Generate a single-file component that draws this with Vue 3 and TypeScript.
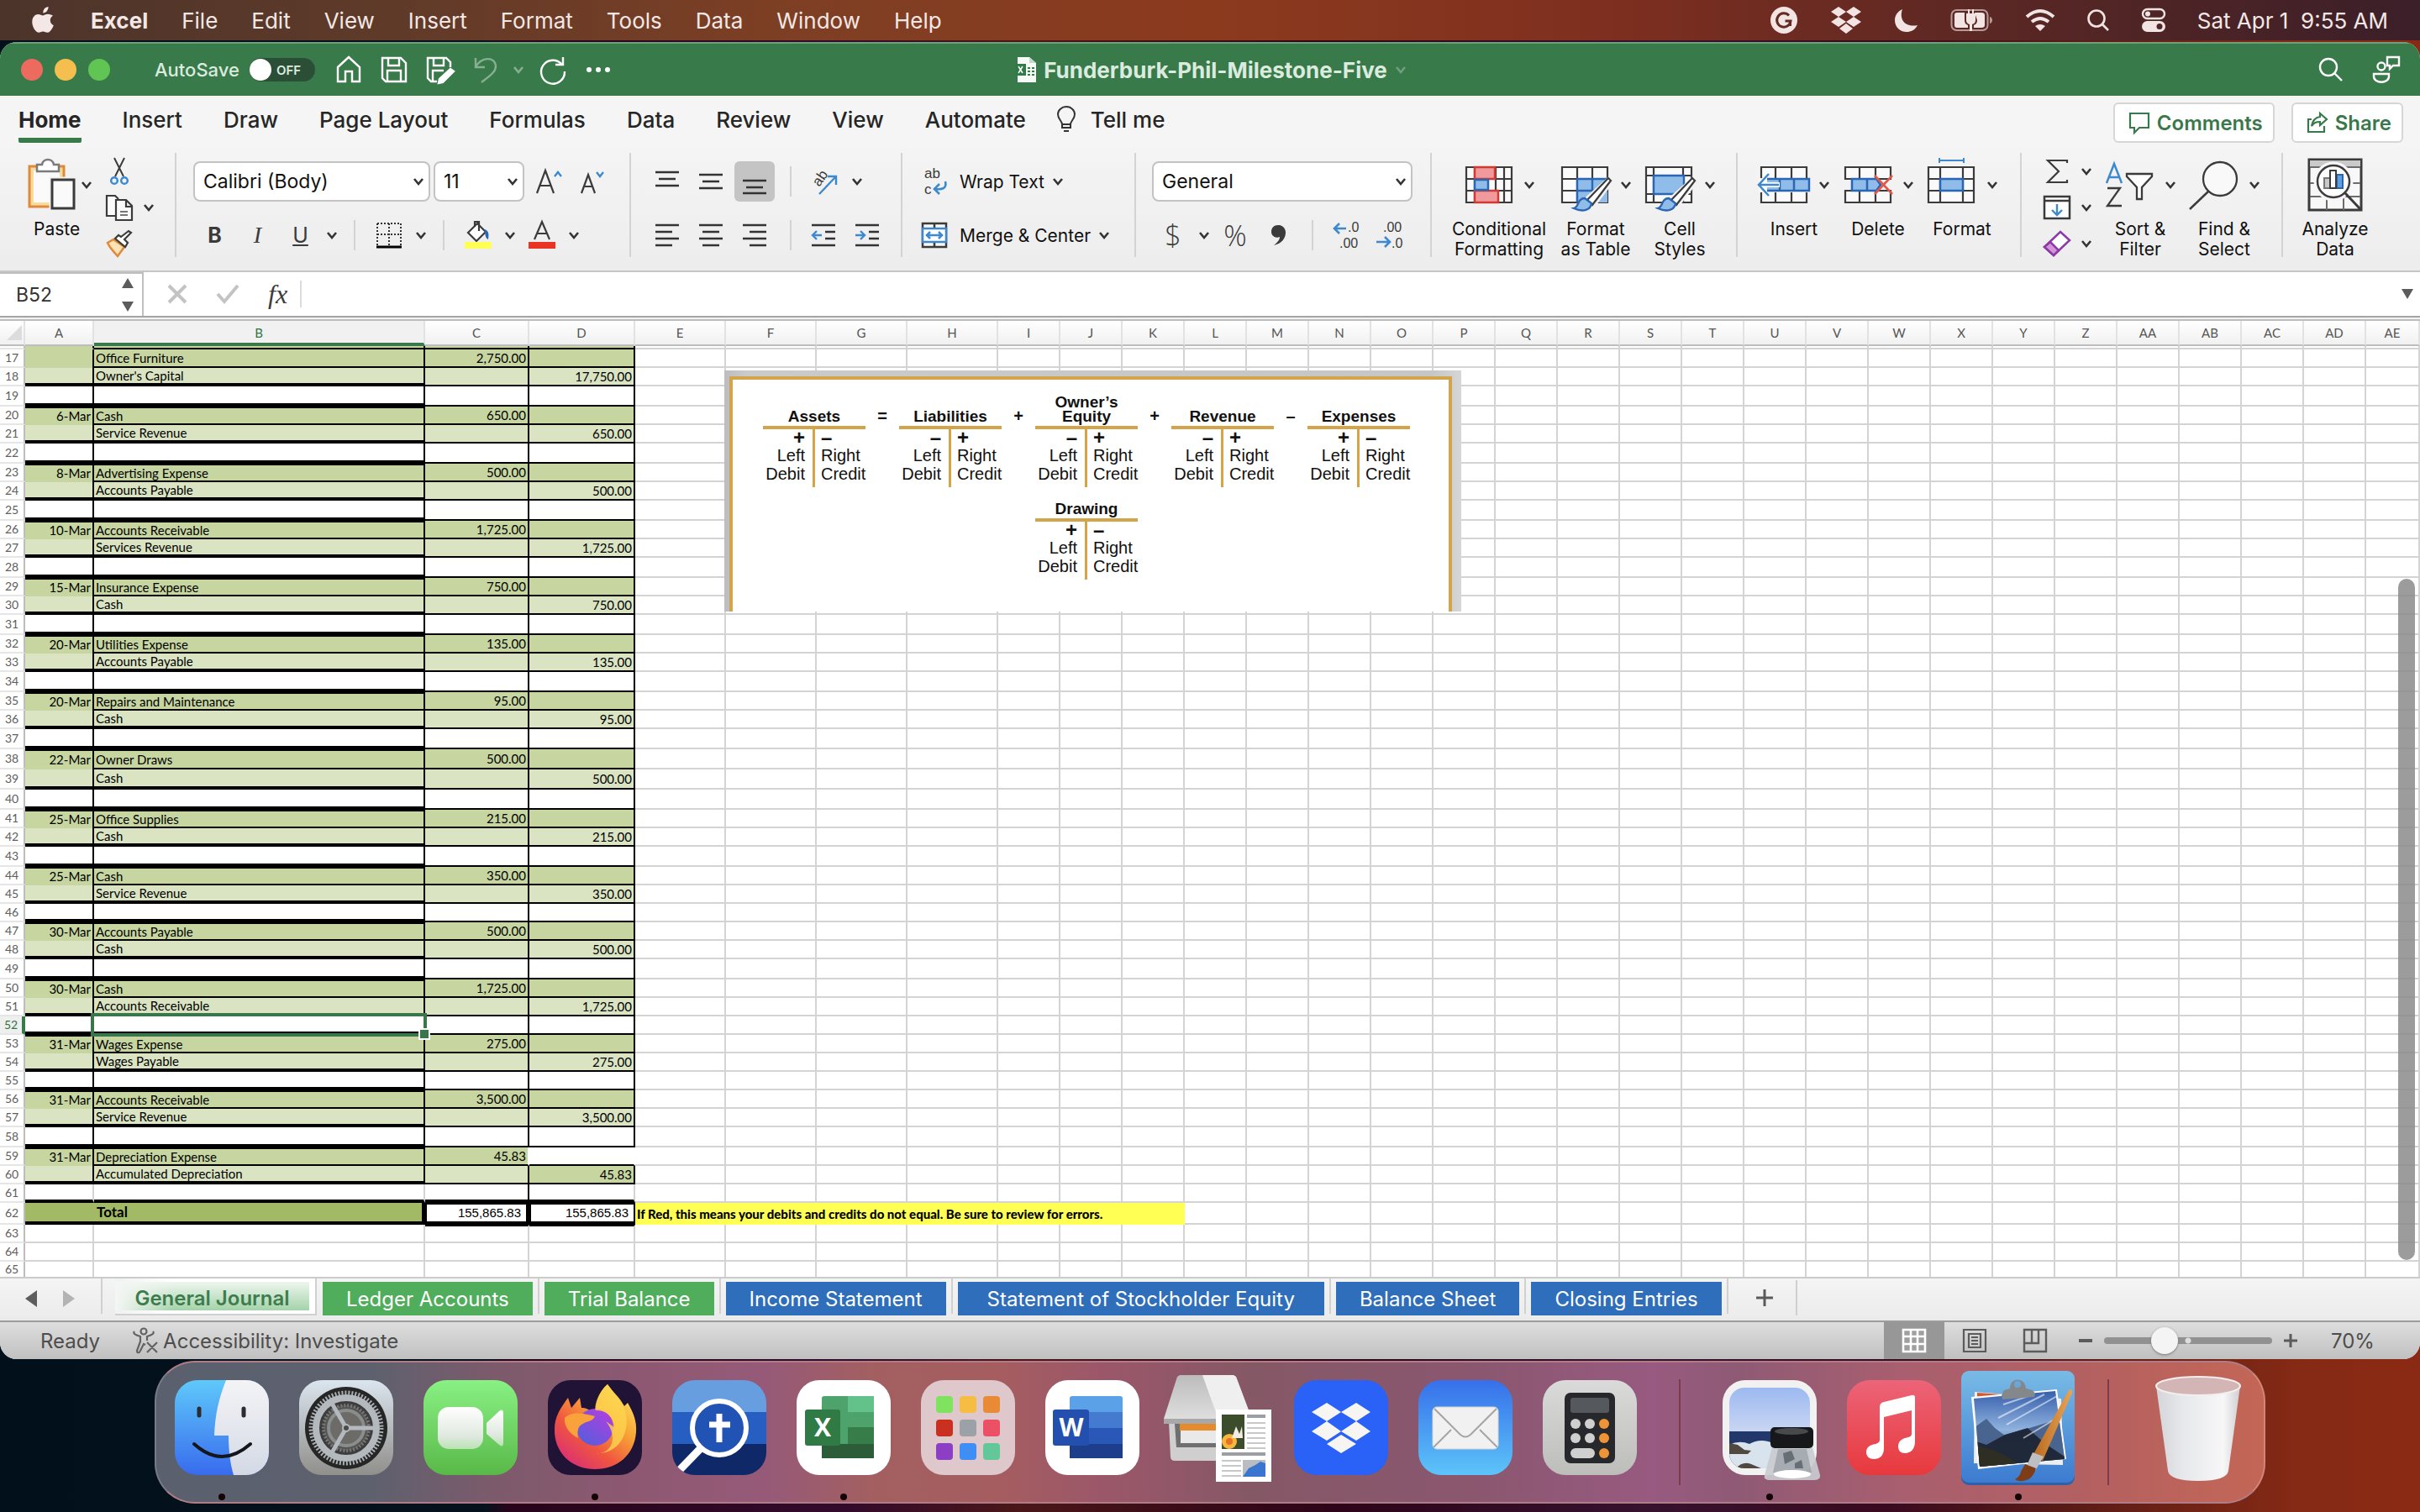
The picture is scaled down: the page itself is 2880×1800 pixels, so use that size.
<script setup lang="ts">
import { h, ref, type FunctionalComponent } from 'vue'

type RowKind = 'dark' | 'light' | 'gap' | 'plain'

interface JournalRow {
  n: number
  kind: RowKind
  height: number
  date?: string
  account?: string
  debit?: string
  credit?: string
}

const Caret: FunctionalComponent = () =>
  h('svg', { class: 'caret', viewBox: '0 0 16 16', 'aria-hidden': 'true' }, [
    h('path', { d: 'M3 5l5 6 5-6', fill: 'none', stroke: 'currentColor', 'stroke-width': '2.6' }),
  ])

const menus = ['File', 'Edit', 'View', 'Insert', 'Format', 'Tools', 'Data', 'Window', 'Help']
const ribbonTabs = ['Home', 'Insert', 'Draw', 'Page Layout', 'Formulas', 'Data', 'Review', 'View', 'Automate']

const restColumns = 'EFGHIJKLMNOPQRSTUVWXYZ'.split('').concat(['AA', 'AB', 'AC', 'AD', 'AE'])
const columns = ['A', 'B', 'C', 'D', ...restColumns]
const wideColumns = ['E', 'F', 'G', 'H']

const entries: [number, string, string, string, string][] = [
  [20, '6-Mar', 'Cash', 'Service Revenue', '650.00'],
  [23, '8-Mar', 'Advertising Expense', 'Accounts Payable', '500.00'],
  [26, '10-Mar', 'Accounts Receivable', 'Services Revenue', '1,725.00'],
  [29, '15-Mar', 'Insurance Expense', 'Cash', '750.00'],
  [32, '20-Mar', 'Utilities Expense', 'Accounts Payable', '135.00'],
  [35, '20-Mar', 'Repairs and Maintenance', 'Cash', '95.00'],
  [38, '22-Mar', 'Owner Draws', 'Cash', '500.00'],
  [41, '25-Mar', 'Office Supplies', 'Cash', '215.00'],
  [44, '25-Mar', 'Cash', 'Service Revenue', '350.00'],
  [47, '30-Mar', 'Accounts Payable', 'Cash', '500.00'],
  [50, '30-Mar', 'Cash', 'Accounts Receivable', '1,725.00'],
  [53, '31-Mar', 'Wages Expense', 'Wages Payable', '275.00'],
  [56, '31-Mar', 'Accounts Receivable', 'Service Revenue', '3,500.00'],
  [59, '31-Mar', 'Depreciation Expense', 'Accumulated Depreciation', '45.83'],
]

const shortGaps = [46, 52, 55]

const rows: JournalRow[] = [
  { n: 17, kind: 'dark', height: 22, account: 'Office Furniture', debit: '2,750.00' },
  { n: 18, kind: 'light', height: 22, account: "Owner's Capital", credit: '17,750.00' },
]
for (const [n, date, debitAccount, creditAccount, amount] of entries) {
  const tall = n === 38 ? 24 : 22
  rows.push({ n: n - 1, kind: 'gap', height: shortGaps.includes(n - 1) ? 22 : 24 })
  rows.push({ n, kind: 'dark', height: tall, date, account: debitAccount, debit: amount })
  rows.push({ n: n + 1, kind: 'light', height: tall, account: creditAccount, credit: amount })
}
rows.push({ n: 61, kind: 'plain', height: 22 })

const sheetTabs = [
  { name: 'Ledger Accounts', tone: 'green' },
  { name: 'Trial Balance', tone: 'green' },
  { name: 'Income Statement', tone: 'blue' },
  { name: 'Statement of Stockholder Equity', tone: 'blue long' },
  { name: 'Balance Sheet', tone: 'blue' },
  { name: 'Closing Entries', tone: 'blue' },
]

const accounts = [
  { title: ['Assets'], left: '+', right: '–', op: '=' },
  { title: ['Liabilities'], left: '–', right: '+', op: '+' },
  { title: ['Owner’s', 'Equity'], left: '–', right: '+', op: '+' },
  { title: ['Revenue'], left: '–', right: '+', op: '–' },
  { title: ['Expenses'], left: '+', right: '–', op: '' },
]

const launchpadTiles = [
  ['#7fe35f', '#f5bd42', '#e98a36'],
  ['#c9301f', '#9aa2a8', '#ec5064'],
  ['#8c3fc4', '#3f8df5', '#62c89a'],
]

const fontName = ref('Calibri (Body)')
const fontSize = ref('11')
const numberFormat = ref('General')
const cellName = ref('B52')
const formula = ref('')
const autoSave = ref(false)
const zoom = ref(70)
</script>

<template>
  <div class="desktop">
    <header class="menubar">
      <svg class="apple" viewBox="0 0 28 34" aria-hidden="true">
        <path d="M19.5 1c.2 2-.6 3.900-1.700 5.200-1.200 1.400-2.900 2.300-4.500 2.200-.2-1.900.7-3.900 1.700-5.100C16.200 1.900 18.100 1.100 19.500 1zM25 11.800c-2 1.200-3.200 3-3.200 5.400 0 2.800 1.600 4.900 4 5.800-.5 1.600-1.300 3.200-2.300 4.700-1.400 2-2.800 4-5 4s-2.800-1.300-5.300-1.300-3.300 1.300-5.300 1.300c-2.200 0-3.800-2.200-5.200-4.200C.9 24.700-.3 20.500.5 16.600c.7-3.800 3.400-6.700 7-6.700 2.300 0 4.200 1.500 5.600 1.500 1.400 0 3.600-1.700 6.200-1.600 2.200.1 4.300.9 5.700 2z" />
      </svg>
      <nav class="menus">
        <button class="menu app-name">Excel</button>
        <button v-for="m in menus" :key="m" class="menu">{{ m }}</button>
      </nav>
      <div class="extras">
        <svg width="34" height="34" viewBox="0 0 34 34"><circle cx="17" cy="17" r="16" /><path d="M23 11.500a8.200 8.200 0 1 0 2 6.500h-6.500M24.500 18v6" fill="none" stroke="#632a23" stroke-width="3" /></svg>
        <svg width="40" height="34" viewBox="0 0 40 34"><path d="M11 1l9 6-9 6-9-6zM29 1l9 6-9 6-9-6zM11 13l9 6-9 6-9-6zM29 13l9 6-9 6-9-6zM20 21l8 6-8 6-8-6z" /></svg>
        <svg width="30" height="30" viewBox="0 0 30 30"><path d="M10 2C6 13 12 24 28 21 25 27 20 29 15 29 7 29 1 23 1 15 1 9 5 4 10 2z" /></svg>
        <svg width="52" height="30" viewBox="0 0 52 30"><rect x="1.500" y="3" width="43" height="24" rx="6" fill="none" stroke="#b59a98" stroke-width="2" /><path d="M47 11c4 1 4 7 0 8z" fill="#b59a98" /><path d="M8 6h9v9c0 4 2 5 4 6v3H8q-3 0-3-3V9q0-3 3-3zM29 6h8q4 0 4 3v12q0 3-4 3h-9v-3c3-1 4-3 4-6z" /><path d="M19 7h2V2h2v5h3V2h2v5h2v8q0 4-4 5v8h-3v-8q-4-1-4-5z" /></svg>
        <svg width="36" height="28" viewBox="0 0 36 28"><path d="M2 10Q18-4 34 10M8 16q10-8 20 0" fill="none" stroke="#f1e4e2" stroke-width="4" /><path d="M12 21q6-4 12 0l-6 6z" /></svg>
        <svg width="28" height="28" viewBox="0 0 28 28"><g fill="none" stroke="#f1e4e2" stroke-width="2.600"><circle cx="12" cy="12" r="9.500" /><path d="M19 19l7 7" /></g></svg>
        <svg width="30" height="30" viewBox="0 0 30 30"><rect x="2" y="2" width="26" height="11" rx="5.500" fill="none" stroke="#f1e4e2" stroke-width="2.400" /><circle cx="8" cy="7.500" r="3" /><rect x="1" y="16" width="28" height="13" rx="6.500" /><circle cx="22" cy="22.500" r="3.500" fill="#4f2526" /></svg>
        <span class="clock">Sat Apr 1&nbsp; 9:55 AM</span>
      </div>
    </header>

    <main class="window">
      <section class="titlebar">
        <div class="title-left">
          <div class="lights">
            <button class="light red" aria-label="Close"></button>
            <button class="light amber" aria-label="Minimize"></button>
            <button class="light lime" aria-label="Zoom"></button>
          </div>
          <label class="autosave">AutoSave
            <span class="toggle"><input v-model="autoSave" type="checkbox" /><i></i><b>OFF</b></span>
          </label>
          <div class="quick">
            <button aria-label="Home"><svg width="32" height="32" viewBox="0 0 32 32"><path d="M3 13L16 1l13 12v17h-9V18h-8v12H3z" /></svg></button>
            <button aria-label="Save"><svg width="32" height="32" viewBox="0 0 32 32"><path d="M2 2h22l6 6v22H6l-4-4zM9 2v9h13V2M8 30V17h16v13" /></svg></button>
            <button aria-label="Save as"><svg width="34" height="32" viewBox="0 0 34 32"><path d="M13 30H6l-4-4V2h22l5 5v6M9 2v9h12V2M8 30V17h13" /><path d="M29 15l4 3-13 13-5 1 1-5z" fill="#fff" /></svg></button>
            <button class="dim" aria-label="Undo"><svg width="32" height="32" viewBox="0 0 32 32"><path d="M3 2v11h11M3 13C10 0 26 0 27 12c0 7-8 12-17 19" /></svg></button>
            <button class="dim small" aria-label="Undo list"><Caret /></button>
            <button aria-label="Redo"><svg width="34" height="34" viewBox="0 0 34 34"><path d="M29 2v9h-9M28 11A14 14 0 1 0 31 19" /></svg></button>
            <button aria-label="More"><svg width="30" height="8" viewBox="0 0 30 8"><g fill="#fff" stroke="none"><circle cx="4" cy="4" r="3" /><circle cx="15" cy="4" r="3" /><circle cx="26" cy="4" r="3" /></g></svg></button>
          </div>
        </div>
        <h1 class="doc-title">
          <svg width="26" height="30" viewBox="0 0 26 30"><path d="M3 0h14l8 7v23H3z" fill="#f6faf7" /><path d="M17 0v7h8z" fill="#c4d8c9" /><path d="M0 8h13v14H0z" fill="#2f7a46" /><path d="M4 11l5 8M9 11l-5 8" stroke="#fff" stroke-width="1.500" /><path d="M15 12h3v2h-3zM20 12h3v2h-3zM15 16h3v2h-3zM20 16h3v2h-3zM15 20h3v2h-3zM20 20h3v2h-3z" fill="#377b49" /></svg>
          <span>Funderburk-Phil-Milestone-Five</span>
          <Caret />
        </h1>
        <div class="title-right">
          <button aria-label="Search"><svg width="30" height="30" viewBox="0 0 30 30"><circle cx="13" cy="12" r="10" /><path d="M20 19l9 9" /></svg></button>
          <button aria-label="Presence"><svg width="36" height="34" viewBox="0 0 36 34"><circle cx="12" cy="13" r="4.500" /><path d="M3 22h18v3c0 9-18 9-18 0zM19 2h14v10h-7l-4 4v-4h-3z" /></svg></button>
        </div>
      </section>

      <section class="tabs">
        <nav class="tab-list">
          <button v-for="(t, i) in ribbonTabs" :key="t" :class="['tab', { active: i === 0 }]">{{ t }}</button>
          <button class="tab tell">
            <svg width="22" height="32" viewBox="0 0 22 32"><path d="M6 22c0-4-5-6-5-12a10 9 0 0 1 20 0c0 6-5 8-5 12v4H6zM6 22h10M8 30h6" fill="none" stroke="#333" stroke-width="2" /></svg>
            <span>Tell me</span>
          </button>
        </nav>
        <div class="tab-actions">
          <button class="pill"><svg width="26" height="26" viewBox="0 0 26 26"><path d="M2 2h22v17H13l-6 6v-6H2z" /></svg>Comments</button>
          <button class="pill"><svg width="26" height="26" viewBox="0 0 26 26"><path d="M6 9H2v15h19v-7M16 2l8 7-8 7v-4c-5 0-7 1-10 5 1-6 4-10 10-11z" /></svg>Share</button>
        </div>
      </section>

      <section class="ribbon">
        <div class="group clipboard">
          <div class="big">
            <button class="icon-row" aria-label="Paste">
              <svg width="64" height="64" viewBox="0 0 64 64"><path d="M6 10h41v48H6z" fill="#f8dc9b" stroke="#e1893b" stroke-width="3" /><path d="M11 15h31v38H11z" fill="#fafafa" /><path d="M15 8h6c1-8 13-8 14 0h6v8H15z" fill="#fff" stroke="#7b7b7b" stroke-width="2.500" /><path d="M33 26h26v34H33z" fill="#fff" stroke="#f1f1f1" stroke-width="7" /><path d="M33 26h26v34H33z" fill="#fafafa" stroke="#3b3b3b" stroke-width="3" /></svg>
              <Caret />
            </button>
            <span class="big-label">Paste</span>
          </div>
          <div class="stack">
            <button aria-label="Cut"><svg width="34" height="32" viewBox="0 0 34 32"><path d="M11 0l11 22M23 0L12 22" fill="none" stroke="#3b3b3b" stroke-width="2" /><g fill="none" stroke="#3c89d0" stroke-width="2.500"><circle cx="11" cy="27" r="3.800" /><circle cx="23" cy="27" r="3.800" /></g></svg></button>
            <button aria-label="Copy"><svg width="34" height="32" viewBox="0 0 34 32"><g fill="#fafafa" stroke="#3b3b3b" stroke-width="2.200"><path d="M12 26H2V2h10l4 4" /><path d="M13 7h12l7 7v17H13zM25 7v8h7" /></g><path d="M18 21h9M18 25h9" stroke="#777" stroke-width="2" /></svg><Caret /></button>
            <button aria-label="Format painter"><svg width="34" height="32" viewBox="0 0 34 32"><path d="M3 15l7-4 13 9-8 11C11 26 6 22 3 15z" fill="#fbe3b4" stroke="#e1893b" stroke-width="2.500" /><path d="M12 10l12 10 3-5-4-4 8-8-3-2-9 7-3-2z" fill="#fff" stroke="#3b3b3b" stroke-width="2.200" /></svg></button>
          </div>
        </div>

        <div class="group font">
          <div class="line">
            <label class="combo name"><select v-model="fontName" aria-label="Font"><option>Calibri (Body)</option></select><Caret /></label>
            <label class="combo size"><select v-model="fontSize" aria-label="Font size"><option>11</option></select><Caret /></label>
            <button class="tool grow" aria-label="Increase font size"><svg width="32" height="30" viewBox="0 0 32 30"><path d="M1 29L11 2l10 27M4 20h14" fill="none" stroke="#3b3b3b" stroke-width="2.200" /><path d="M22 9l4-5 4 5" fill="none" stroke="#3c89d0" stroke-width="2.400" /></svg></button>
            <button class="tool" aria-label="Decrease font size"><svg width="32" height="30" viewBox="0 0 32 30"><path d="M2 29L10 7l8 22M5 21h10" fill="none" stroke="#3b3b3b" stroke-width="2.200" /><path d="M20 4l4 5 4-5" fill="none" stroke="#3c89d0" stroke-width="2.400" /></svg></button>
          </div>
          <div class="line">
            <button class="tool glyph bold">B</button>
            <button class="tool glyph italic">I</button>
            <button class="tool glyph under">U</button>
            <button class="drop" aria-label="Underline style"><Caret /></button>
            <i class="rule"></i>
            <button class="tool" aria-label="Borders"><svg width="32" height="32" viewBox="0 0 32 32"><path d="M2 2h28v26M2 2v26M16 2v26M2 15h28" fill="none" stroke="#333" stroke-width="2" stroke-dasharray="2 2" /><path d="M1 30h30" stroke="#000" stroke-width="3" /></svg></button>
            <button class="drop" aria-label="Border list"><Caret /></button>
            <i class="rule"></i>
            <button class="tool" aria-label="Fill colour"><svg width="34" height="34" viewBox="0 0 34 34"><path d="M5 14L16 3l10 10-11 11zM13 7V1h5v11" fill="#fff" stroke="#3b3b3b" stroke-width="2.200" /><path d="M24 10c6 1 6 6 5 12-4-2-3-6-5-12z" fill="#2a66b4" /><path d="M1 25h32v8H1z" fill="#ffff54" /></svg></button>
            <button class="drop" aria-label="Fill list"><Caret /></button>
            <button class="tool" aria-label="Font colour"><svg width="34" height="34" viewBox="0 0 34 34"><path d="M8 22L17 1l9 21M11 15h12" fill="none" stroke="#3b3b3b" stroke-width="2.200" /><path d="M1 25h32v8H1z" fill="#eb3323" /></svg></button>
            <button class="drop" aria-label="Font colour list"><Caret /></button>
          </div>
        </div>

        <div class="group align">
          <div class="line">
            <button class="al" aria-label="Top align"><svg width="30" height="30" viewBox="0 0 30 30"><path d="M1 4h28M5 12h20M1 20h28" /></svg></button>
            <button class="al" aria-label="Middle align"><svg width="30" height="30" viewBox="0 0 30 30"><path d="M1 7h28M5 15h20M1 23h28" /></svg></button>
            <button class="al pressed" aria-label="Bottom align"><svg width="30" height="30" viewBox="0 0 30 30"><path d="M1 14h28M5 22h20M1 29h28" /></svg></button>
            <i class="rule"></i>
            <button class="al" aria-label="Orientation"><svg width="36" height="34" viewBox="0 0 36 34"><text x="0" y="0" transform="translate(13 24) rotate(-55)" class="ab">ab</text><path d="M13 32L32 12M23 11h10v10" class="blue" /></svg></button>
            <button class="drop" aria-label="Orientation list"><Caret /></button>
          </div>
          <div class="line">
            <button class="al" aria-label="Align left"><svg width="30" height="30" viewBox="0 0 30 30"><path d="M1 3h28M1 11h20M1 19h28M1 27h20" /></svg></button>
            <button class="al" aria-label="Center"><svg width="30" height="30" viewBox="0 0 30 30"><path d="M1 3h28M5 11h20M1 19h28M5 27h20" /></svg></button>
            <button class="al" aria-label="Align right"><svg width="30" height="30" viewBox="0 0 30 30"><path d="M1 3h28M9 11h20M1 19h28M9 27h20" /></svg></button>
            <i class="rule"></i>
            <button class="al" aria-label="Decrease indent"><svg width="30" height="30" viewBox="0 0 30 30"><path d="M1 3h28M17 11h12M17 19h12M1 27h28" /><path d="M13 15H2M7 10l-5 5 5 5" class="blue" /></svg></button>
            <button class="al" aria-label="Increase indent"><svg width="30" height="30" viewBox="0 0 30 30"><path d="M1 3h28M17 11h12M17 19h12M1 27h28" /><path d="M1 15h11M7 10l5 5-5 5" class="blue" /></svg></button>
          </div>
        </div>

        <div class="group wrap">
          <div class="line">
            <button class="wide"><svg width="32" height="38" viewBox="0 0 32 38"><text x="4" y="15" class="ab">ab</text><text x="4" y="34" class="ab">c</text><path d="M29 19c2 8-3 10-12 9M22 22l-6 6 6 6" fill="none" stroke="#3c89d0" stroke-width="2.600" /></svg><span>Wrap Text</span><Caret /></button>
          </div>
          <div class="line">
            <button class="wide"><svg width="32" height="32" viewBox="0 0 32 32"><path d="M2 2h28v28H2zM16 2v28" fill="#fafafa" stroke="#3b3b3b" stroke-width="2.500" /><path d="M2 8h28v16H2z" fill="#fff" stroke="#3c89d0" stroke-width="2.500" /><path d="M7 16h18M11 12l-4 4 4 4M21 12l4 4-4 4" fill="none" stroke="#3c89d0" stroke-width="2.500" /></svg><span>Merge &amp; Center</span><Caret /></button>
          </div>
        </div>

        <div class="group number">
          <div class="line">
            <label class="combo format"><select v-model="numberFormat" aria-label="Number format"><option>General</option></select><Caret /></label>
          </div>
          <div class="line">
            <button class="tool sign">$</button>
            <button class="drop" aria-label="Currency list"><Caret /></button>
            <button class="tool sign">%</button>
            <button class="tool" aria-label="Comma style"><svg width="20" height="28" viewBox="0 0 20 28"><path d="M10 2c6 0 9 4 9 9 0 7-5 13-14 15 5-4 7-7 7-10-5 2-10-1-10-6 0-5 3-8 8-8z" fill="#3b3b3b" /></svg></button>
            <i class="rule"></i>
            <button class="tool" aria-label="Increase decimal"><svg width="36" height="40" viewBox="0 0 36 40"><text x="19" y="16" class="dec">.0</text><text x="9" y="35" class="dec">.00</text><path d="M17 12H3M9 6l-6 6 6 6" fill="none" stroke="#3c89d0" stroke-width="2.600" /></svg></button>
            <button class="tool" aria-label="Decrease decimal"><svg width="36" height="40" viewBox="0 0 36 40"><text x="9" y="16" class="dec">.00</text><text x="19" y="35" class="dec">.0</text><path d="M1 28h15M11 22l6 6-6 6" fill="none" stroke="#3c89d0" stroke-width="2.600" /></svg></button>
          </div>
        </div>

        <div class="group styles">
          <div class="big cf">
            <button class="icon-row" aria-label="Conditional formatting"><svg width="64" height="64" viewBox="0 0 64 64"><path d="M5 11h54v42H5zM5 25h54M5 39h54M15 11v42M40 11v42M50 11v42" class="grid" /><path d="M15 11h24v14H15zM15 39h28v14H15z" fill="#f19a9e" stroke="#ce3b30" stroke-width="2.500" /><path d="M15 26h16v12H15z" fill="#8fbce8" stroke="#2a66b4" stroke-width="2.500" /></svg><Caret /></button>
            <span class="big-label">Conditional<br />Formatting</span>
          </div>
          <div class="big">
            <button class="icon-row" aria-label="Format as table"><svg width="64" height="64" viewBox="0 0 64 64"><path d="M4 11h54v42H4zM4 25h54M4 39h54M22 11v42M40 11v42" class="grid" /><path d="M22 25h36v28H22z" fill="#8fbce8" /><path d="M22 53V25h36M22 39h36M40 25v28" fill="none" stroke="#2a66b4" stroke-width="2.400" /><path d="M33 49L60 25l3 3-22 29z" fill="#fff" stroke="#f1f1f1" stroke-width="5" /><path d="M34 50L59 24l3 3-22 29z" fill="#fff" stroke="#3b3b3b" stroke-width="2.200" /><path d="M18 60c6-1 4-12 13-12l8 6c-1 8-10 11-21 6z" fill="#8fbce8" stroke="#2a66b4" stroke-width="2.300" /></svg><Caret /></button>
            <span class="big-label">Format<br />as Table</span>
          </div>
          <div class="big">
            <button class="icon-row" aria-label="Cell styles"><svg width="64" height="64" viewBox="0 0 64 64"><path d="M4 11h54v42H4zM4 21h54M4 43h54M13 11v42M48 11v42" class="grid" /><path d="M13 21h36v22H13z" fill="#8fbce8" stroke="#2a66b4" stroke-width="2.400" /><path d="M33 49L60 25l3 3-22 29z" fill="#fff" stroke="#f1f1f1" stroke-width="5" /><path d="M34 50L59 24l3 3-22 29z" fill="#fff" stroke="#3b3b3b" stroke-width="2.200" /><path d="M18 60c6-1 4-12 13-12l8 6c-1 8-10 11-21 6z" fill="#8fbce8" stroke="#2a66b4" stroke-width="2.300" /></svg><Caret /></button>
            <span class="big-label">Cell<br />Styles</span>
          </div>
        </div>

        <div class="group cells">
          <div class="big">
            <button class="icon-row" aria-label="Insert cells"><svg width="64" height="64" viewBox="0 0 64 64"><path d="M5 11h54v42H5zM22 11v42M41 11v42" class="grid" /><path d="M2 24h62v17H2z" fill="#f8f8f8" /><path d="M12 25h50v14H12M44 25v14M27 25v14" fill="#8fbce8" stroke="#2a66b4" stroke-width="2.500" /><path d="M5 29h22v6H5z" fill="#fff" /><path d="M26 32H2M14 19L2 32l12 13" fill="none" stroke="#3c89d0" stroke-width="2.500" /></svg><Caret /></button>
            <span class="big-label">Insert</span>
          </div>
          <div class="big">
            <button class="icon-row" aria-label="Delete cells"><svg width="64" height="64" viewBox="0 0 64 64"><path d="M5 11h54v14H5zM5 39h54v14H5zM22 11v14M41 11v14M22 39v14M41 39v14" class="grid" /><path d="M13 25h29l5 7-5 7H13z" fill="#8fbce8" stroke="#2a66b4" stroke-width="2.500" /><path d="M31 25v14" stroke="#2a66b4" stroke-width="2.500" /><path d="M40 21l21 22M61 21L40 43" stroke="#e25549" stroke-width="2.600" /></svg><Caret /></button>
            <span class="big-label">Delete</span>
          </div>
          <div class="big">
            <button class="icon-row" aria-label="Format cells"><svg width="64" height="64" viewBox="0 0 64 64"><path d="M4 11h54v42H4zM4 25h54M4 39h54M18 11v42M45 11v42" class="grid" /><path d="M18 25h27v14H18z" fill="#8fbce8" stroke="#2a66b4" stroke-width="2.500" /><path d="M17 3h29M17 0v6M46 0v6" stroke="#3c89d0" stroke-width="2" /></svg><Caret /></button>
            <span class="big-label">Format</span>
          </div>
        </div>

        <div class="group editing">
          <div class="stack">
            <button aria-label="AutoSum"><svg width="34" height="32" viewBox="0 0 34 32"><path d="M29 6V3H6l13 13L6 29h23v-3" fill="none" stroke="#3b3b3b" stroke-width="2.200" /></svg><Caret /></button>
            <button aria-label="Fill"><svg width="34" height="32" viewBox="0 0 34 32"><path d="M2 3h30v26H2zM2 8h30" fill="#fff" stroke="#3b3b3b" stroke-width="2.500" /><path d="M17 12v13M11 19l6 6 6-6" fill="none" stroke="#3c89d0" stroke-width="2.400" /></svg><Caret /></button>
            <button aria-label="Clear"><svg width="34" height="32" viewBox="0 0 34 32"><path d="M21 2l11 10-19 18L2 20z" fill="#fff" stroke="#8d3aa8" stroke-width="2.500" /><path d="M9 14L2 20l11 10 6-6z" fill="#d394d8" stroke="#8d3aa8" stroke-width="2.500" /></svg><Caret /></button>
          </div>
          <div class="big">
            <button class="icon-row" aria-label="Sort and filter"><svg width="64" height="64" viewBox="0 0 64 64"><path d="M4 30L13 7l9 23M7 23h12" fill="none" stroke="#3c89d0" stroke-width="2.500" /><path d="M5 36h15L5 57h17" fill="none" stroke="#3b3b3b" stroke-width="2.300" /><path d="M28 19h30v3L46 35v14h-6V35L28 22z" fill="#fff" stroke="#3b3b3b" stroke-width="2.300" /></svg><Caret /></button>
            <span class="big-label">Sort &amp;<br />Filter</span>
          </div>
          <div class="big">
            <button class="icon-row" aria-label="Find and select"><svg width="64" height="64" viewBox="0 0 64 64"><circle cx="39" cy="25" r="20" fill="#f9f9f9" stroke="#3b3b3b" stroke-width="2.300" /><path d="M25 40L3 61" stroke="#3b3b3b" stroke-width="2.500" /></svg><Caret /></button>
            <span class="big-label">Find &amp;<br />Select</span>
          </div>
        </div>

        <div class="group analyze">
          <div class="big">
            <button class="icon-row" aria-label="Analyze data"><svg width="66" height="64" viewBox="0 0 66 64"><path d="M2 2h62v60H2z" fill="#f8f8f8" stroke="#3b3b3b" stroke-width="3" /><path d="M3 3h60v7H3z" fill="#c9c9c9" /><path d="M3 11h60M3 30h60M3 46h60M23 46v16M43 46v16" stroke="#6c6c6c" stroke-width="2" /><circle cx="31" cy="28" r="20" fill="#fff" stroke="#f6f6f6" stroke-width="7" /><circle cx="31" cy="28" r="19" fill="#fff" stroke="#3b3b3b" stroke-width="2.500" /><path d="M20 24h7v12h-7z" fill="#c9c9c9" stroke="#777" stroke-width="2" /><path d="M35 20h7v16h-7z" fill="#5ea1e0" stroke="#2a66b4" stroke-width="2" /><path d="M27 15h7v21h-7z" fill="#fff" stroke="#3b3b3b" stroke-width="2" /><path d="M45 42l18 19" stroke="#3b3b3b" stroke-width="3" /></svg></button>
            <span class="big-label">Analyze<br />Data</span>
          </div>
        </div>
      </section>

      <section class="formula-bar">
        <div class="name-box">
          <input v-model="cellName" aria-label="Name box" />
          <svg width="16" height="42" viewBox="0 0 16 42"><path d="M1 13L8 1l7 12zM1 29l7 12 7-12z" fill="#5c5c5c" /></svg>
        </div>
        <div class="fx-tools">
          <button aria-label="Cancel"><svg width="24" height="24" viewBox="0 0 24 24"><path d="M2 2l20 20M22 2L2 22" stroke="#c3c3c3" stroke-width="4" /></svg></button>
          <button aria-label="Enter"><svg width="28" height="24" viewBox="0 0 28 24"><path d="M2 12l8 9L26 2" fill="none" stroke="#c3c3c3" stroke-width="4" /></svg></button>
          <button class="fx">fx</button>
        </div>
        <input v-model="formula" class="formula" aria-label="Formula" />
        <svg class="expand" width="16" height="12" viewBox="0 0 16 12"><path d="M1 0h14L8 12z" fill="#5c5c5c" /></svg>
      </section>

      <section class="sheet">
        <table>
          <colgroup>
            <col class="c-num" /><col class="c-a" /><col class="c-b" /><col class="c-c" /><col class="c-d" />
            <col v-for="c in restColumns" :key="c" :class="wideColumns.includes(c) ? 'c-wide' : c === 'AE' ? '' : 'c-std'" />
          </colgroup>
          <thead>
            <tr>
              <th class="corner"><svg width="18" height="18" viewBox="0 0 18 18"><path d="M18 0v18H0z" fill="#dcdcdc" /></svg></th>
              <th v-for="c in columns" :key="c" :class="{ current: c === 'B' }">{{ c }}</th>
            </tr>
          </thead>
          <tbody>
            <tr class="sliver">
              <th></th><td class="a dark"></td><td class="b dark"></td><td class="n dark"></td><td class="n dark"></td>
              <td v-for="c in restColumns" :key="c"></td>
            </tr>
            <tr v-for="r in rows" :key="r.n" :class="['row', 'h' + r.height, 'r-' + r.kind, 'row-' + r.n]">
              <th :class="{ current: r.n === 52 }">{{ r.n }}</th>
              <td class="a">{{ r.date }}</td>
              <td class="b">{{ r.account }}<span v-if="r.n === 52" class="cursor"><i></i></span></td>
              <td class="n c">{{ r.debit }}</td>
              <td class="n d">{{ r.credit }}</td>
              <td v-for="c in restColumns" :key="c"></td>
            </tr>
            <tr class="total">
              <th>62</th>
              <td class="ta"></td><td class="tb">Total</td><td class="tc">155,865.83</td><td class="td">155,865.83</td>
              <td class="warn" colspan="7">If Red, this means your debits and credits do not equal. Be sure to review for errors.</td>
              <td v-for="c in restColumns.slice(7)" :key="c"></td>
            </tr>
            <tr v-for="n in [63, 64, 65]" :key="n" :class="['row', n === 65 ? 'h18' : 'h22', 'row-' + n]">
              <th>{{ n }}</th>
              <td></td><td></td><td class="c"></td><td class="d"></td>
              <td v-for="c in restColumns" :key="c"></td>
            </tr>
          </tbody>
        </table>

        <figure class="chart">
          <div class="chart-card">
            <div class="equation">
              <template v-for="a in accounts" :key="a.title[0]">
                <div class="account">
                  <div class="heading"><span v-for="t in a.title" :key="t">{{ t }}</span></div>
                  <div class="tee">
                    <div class="side debit"><b>{{ a.left }}</b><span>Left</span><span>Debit</span></div>
                    <div class="side"><b>{{ a.right }}</b><span>Right</span><span>Credit</span></div>
                  </div>
                </div>
                <b v-if="a.op" class="op">{{ a.op }}</b>
              </template>
            </div>
            <div class="account drawing">
              <div class="heading single"><span>Drawing</span></div>
              <div class="tee">
                <div class="side debit"><b>+</b><span>Left</span><span>Debit</span></div>
                <div class="side"><b>–</b><span>Right</span><span>Credit</span></div>
              </div>
            </div>
          </div>
        </figure>
        <div class="scroll-thumb"></div>
      </section>

      <section class="sheet-tabs">
        <div class="arrows">
          <button aria-label="Previous sheet"><svg width="14" height="20" viewBox="0 0 14 20"><path d="M14 0v20L0 10z" fill="#5d5d5d" /></svg></button>
          <button aria-label="Next sheet"><svg width="14" height="20" viewBox="0 0 14 20"><path d="M0 0v20l14-10z" fill="#b3b3b3" /></svg></button>
        </div>
        <button class="sheet-tab current"><span>General Journal</span></button>
        <template v-for="(t, i) in sheetTabs" :key="t.name">
          <i v-if="i > 0" class="divider"></i>
          <button :class="['sheet-tab', t.tone]">{{ t.name }}</button>
        </template>
        <i class="divider"></i>
        <button class="add" aria-label="Add sheet"><svg width="20" height="20" viewBox="0 0 20 20"><path d="M10 0v20M0 10h20" stroke="#5a5a5a" stroke-width="3" /></svg></button>
      </section>

      <footer class="status">
        <span class="ready">Ready</span>
        <button class="access">
          <svg width="32" height="32" viewBox="0 0 32 32"><g fill="none" stroke="#636363" stroke-width="2.200"><circle cx="14" cy="5" r="3.500" /><path d="M3 5c-2 2 0 4 7 6v6L6 28c0 3 3 3 4 0l4-8 2 1M25 5c2 2 0 4-7 6v5M18 18l12 12M30 18L18 30" /></g></svg>
          <span>Accessibility: Investigate</span>
        </button>
        <div class="views">
          <button class="view on" aria-label="Normal"><svg width="28" height="28" viewBox="0 0 28 28"><path d="M1 1h26v26H1zM1 9h26M1 18h26M10 1v26M18 1v26" fill="#9f9f9f" stroke="#fff" stroke-width="2.600" /></svg></button>
          <button class="view" aria-label="Page layout"><svg width="28" height="28" viewBox="0 0 28 28"><path d="M1 1h26v26H1zM7 6h14v16H7zM10 10h8M10 14h8M10 18h8" fill="none" stroke="#5c5c5c" stroke-width="2.200" /></svg></button>
          <button class="view" aria-label="Page break"><svg width="28" height="28" viewBox="0 0 28 28"><path d="M1 1h26v26H1zM1 17h17V1M10 1v16" fill="none" stroke="#5c5c5c" stroke-width="2.400" /></svg></button>
        </div>
        <div class="zoom">
          <button aria-label="Zoom out"><svg width="16" height="16" viewBox="0 0 16 16"><path d="M0 8h16" stroke="#5c5c5c" stroke-width="4" /></svg></button>
          <input v-model="zoom" type="range" min="10" max="190" aria-label="Zoom" />
          <button aria-label="Zoom in"><svg width="16" height="16" viewBox="0 0 16 16"><path d="M0 8h16M8 0v16" stroke="#5c5c5c" stroke-width="3" /></svg></button>
        </div>
        <span class="percent">70%</span>
      </footer>
    </main>

    <nav class="dock">
      <svg width="0" height="0" class="defs" aria-hidden="true">
        <defs>
          <linearGradient id="gFinder" x2="0" y2="1"><stop stop-color="#5fc9fa" /><stop offset="1" stop-color="#386bee" /></linearGradient>
          <linearGradient id="gFace" x2="0" y2="1"><stop stop-color="#f4f4f6" /><stop offset="1" stop-color="#d3d9e5" /></linearGradient>
          <linearGradient id="gSet" x2="0" y2="1"><stop stop-color="#dbe5ee" /><stop offset="1" stop-color="#908f8b" /></linearGradient>
          <linearGradient id="gGreen" x2="0" y2="1"><stop stop-color="#88f183" /><stop offset="1" stop-color="#59b948" /></linearGradient>
          <linearGradient id="gCam" x2="0" y2="1"><stop stop-color="#fff" /><stop offset=".7" stop-color="#dfe8df" /><stop offset="1" stop-color="#b9e3b2" /></linearGradient>
          <linearGradient id="gFox" x1="1" x2=".2" y2="1"><stop stop-color="#fff36b" /><stop offset=".4" stop-color="#f8a636" /><stop offset=".7" stop-color="#f0563f" /><stop offset="1" stop-color="#d92d77" /></linearGradient>
          <linearGradient id="gGlobe" x1=".8" x2="0" y2="1"><stop stop-color="#b13ee0" /><stop offset="1" stop-color="#4a62dc" /></linearGradient>
          <linearGradient id="gMail" x2="0" y2="1"><stop stop-color="#3670ea" /><stop offset="1" stop-color="#5dc4f9" /></linearGradient>
          <linearGradient id="gGrey" x2="0" y2="1"><stop stop-color="#dadada" /><stop offset="1" stop-color="#bdbdba" /></linearGradient>
          <linearGradient id="gLid" x2="0" y2="1"><stop stop-color="#bcbcbc" /><stop offset="1" stop-color="#e2e2e2" /></linearGradient>
          <linearGradient id="gMusic" x2="0" y2="1"><stop stop-color="#ec6478" /><stop offset="1" stop-color="#e7393d" /></linearGradient>
          <linearGradient id="gPaint" x2="0" y2="1"><stop stop-color="#78bbe6" /><stop offset="1" stop-color="#3c7bd0" /></linearGradient>
          <linearGradient id="gSky" x2="0" y2="1"><stop stop-color="#9cb9f0" /><stop offset="1" stop-color="#c9d6f3" /></linearGradient>
          <linearGradient id="gNight" x2="0" y2="1"><stop stop-color="#3059a8" /><stop offset=".5" stop-color="#8fb2de" /><stop offset="1" stop-color="#40546f" /></linearGradient>
          <linearGradient id="gBin" y2="0"><stop stop-color="#d5d5d9" /><stop offset=".3" stop-color="#e6e7ea" /><stop offset=".8" stop-color="#f7f7f8" /><stop offset="1" stop-color="#cfcfd2" /></linearGradient>
          <linearGradient id="gWood" y2="0"><stop stop-color="#b8691f" /><stop offset="1" stop-color="#e9a455" /></linearGradient>
          <clipPath id="tile"><rect x="18" y="21" width="112" height="113" rx="27" /></clipPath>
          <clipPath id="shot"><rect x="26" y="30" width="96" height="96" rx="18" /></clipPath>
          <clipPath id="photo"><path d="M21 43l97-9 11 81-101 9z" /></clipPath>
        </defs>
      </svg>

      <button class="slot running" aria-label="Finder"><svg viewBox="0 0 148 156"><g clip-path="url(#tile)"><path d="M18 21h112v113H18z" fill="url(#gFinder)" /><path d="M79 21C70 44 66 62 65 87h17c0 18 2 34 6 47h46V21z" fill="url(#gFace)" /></g><path d="M47 55v8M100 55v8" stroke="#2c2c30" stroke-width="5" stroke-linecap="round" /><path d="M41 97q33 30 67 0" fill="none" stroke="#15161c" stroke-width="4" stroke-linecap="round" /></svg></button>
      <button class="slot" aria-label="System Settings"><svg viewBox="0 0 148 156"><rect x="18" y="21" width="112" height="113" rx="27" fill="url(#gSet)" /><circle cx="74" cy="78" r="49" fill="#252625" /><circle cx="74" cy="78" r="42" fill="none" stroke="#a8adb1" stroke-width="5" stroke-dasharray="2 2" /><circle cx="74" cy="78" r="36" fill="#3c3d3c" stroke="#b4b9bd" stroke-width="8" /><circle cx="74" cy="78" r="27" fill="#555552" stroke="#777" stroke-width="4" stroke-dasharray="2 2" /><circle cx="74" cy="78" r="21" fill="#6c6b67" stroke="#8a8d8e" stroke-width="4" /><path d="M74 78h36M74 78L56 47M74 78l-18 31" stroke="#b4b9bd" stroke-width="5" /><circle cx="74" cy="78" r="4" fill="#4c4c4c" stroke="#b4b9bd" stroke-width="2" /></svg></button>
      <button class="slot" aria-label="FaceTime"><svg viewBox="0 0 148 156"><rect x="18" y="21" width="112" height="113" rx="27" fill="url(#gGreen)" /><rect x="35" y="53" width="54" height="50" rx="13" fill="url(#gCam)" /><path d="M93 72l15-14q5-4 5 3v34q0 7-5 3L93 85z" fill="url(#gCam)" /></svg></button>
      <button class="slot running" aria-label="Firefox"><svg viewBox="0 0 148 156"><rect x="18" y="21" width="112" height="113" rx="27" fill="#201336" /><path d="M89 26c8 11 14 15 20 26l4-4c7 12 11 22 10 35-2 27-22 44-49 44-29 0-49-21-48-48 0-14 7-25 16-37l4 12 10-12 2 12c6-1 16 6 16 10 0-12 4-30 15-38z" fill="url(#gFox)" /><circle cx="74" cy="77" r="22" fill="url(#gGlobe)" /><path d="M38 66c8-9 25-5 36-2-3 7-9 5-16 10-5 3-5 10-4 16-10-5-17-14-16-24z" fill="#f9a23b" /><path d="M89 26c-12 11-16 26-14 31 14 0 21 8 22 20l-10-7c16 20 6 40-12 38 30 2 44-30 33-56L89 26z" fill="#fcd44f" opacity=".8" /></svg></button>
      <button class="slot" aria-label="Bible study"><svg viewBox="0 0 148 156"><g clip-path="url(#tile)"><path d="M18 21h112v38H18z" fill="#679ee0" /><path d="M18 59h112v38H18z" fill="#265fc1" /><path d="M18 97h112v38H18z" fill="#0f2868" /><path d="M51 103L23 132" stroke="#fff" stroke-width="9" /></g><circle cx="74" cy="78" r="32" fill="#2053b4" stroke="#fff" stroke-width="6" /><path d="M74 61v34M62 74h25" stroke="#fff" stroke-width="7" /></svg></button>
      <button class="slot running" aria-label="Excel"><svg viewBox="0 0 148 156"><rect x="18" y="21" width="112" height="113" rx="27" fill="#fff" /><rect x="48" y="40" width="62" height="74" rx="3" fill="#4ea36c" /><path d="M79 40h31v19H79z" fill="#63c28a" /><path d="M79 77h31v20H79z" fill="#377d49" /><path d="M48 97h62v17H48z" fill="#2c5c38" /><rect x="28" y="56" width="42" height="43" rx="3" fill="#2f7a45" /><text x="49" y="88" class="letter">X</text></svg></button>
      <button class="slot" aria-label="Launchpad"><svg viewBox="0 0 148 156"><rect x="18" y="21" width="112" height="113" rx="27" fill="#e2cfd1" opacity=".94" /><template v-for="(line, y) in launchpadTiles" :key="y"><rect v-for="(fill, x) in line" :key="fill" :x="36 + x * 28" :y="40 + y * 28" width="20" height="20" rx="4" :fill="fill" /></template></svg></button>
      <button class="slot" aria-label="Word"><svg viewBox="0 0 148 156"><rect x="18" y="21" width="112" height="113" rx="27" fill="#fff" /><rect x="47" y="40" width="63" height="74" rx="3" fill="#5ba1e8" /><path d="M47 59h63v19H47z" fill="#447bd0" /><path d="M47 78h63v19H47z" fill="#2a58b8" /><path d="M47 97h63v17H47z" fill="#1d3f8b" /><rect x="27" y="56" width="43" height="43" rx="3" fill="#2350ae" /><text x="49" y="88" class="letter">W</text></svg></button>
      <button class="slot" aria-label="Image capture"><svg viewBox="0 0 148 156"><path d="M17 70h100v42q0 5-5 5H24q-5 0-5-5z" fill="#cfcfcf" /><path d="M24 73h70v28H26z" fill="#6f6f6f" /><path d="M30 73h60v8H30z" fill="#e58b2c" /><path d="M31 81h60v15H31z" fill="#e9e9e9" /><path d="M30 15h64l3 2 18 48v8H11v-6L27 17z" fill="url(#gLid)" /><path d="M57 15h37l3 2 18 48H75z" fill="#efefef" /><path d="M11 67h104v6H11z" fill="#a8a8a8" /><path d="M73 56h66v86H73z" fill="#fff" /><path d="M80 62h27v41H80z" fill="#3c4d2c" /><circle cx="89" cy="94" r="9" fill="#f6b73c" /><circle cx="89" cy="94" r="4" fill="#e96f2b" /><path d="M97 76l4 9 3-9 1 14H92z" fill="#f2ece4" /><path d="M110 64h22M80 109h52" stroke="#9b9fa4" stroke-width="4" /><path d="M110 72h22M110 78h22M110 84h22M110 90h22M110 96h22M110 102h22M80 117h23M80 123h23M80 129h23M80 135h23" stroke="#c8c8c8" stroke-width="2" /><path d="M105 116h27v20h-27z" fill="#b9bcc0" /><path d="M105 136l7-10 8-4 6-4 6 2v16z" fill="#3a76cf" /></svg></button>
      <button class="slot" aria-label="Dropbox"><svg viewBox="0 0 148 156"><rect x="18" y="21" width="112" height="113" rx="27" fill="#2a61f6" /><path d="M57 48l17 11-17 11-18-11zM92 48l17 11-17 11-18-11zM57 70l17 12-17 11-18-11zM92 70l17 12-17 11-18-11zM74 86l18 11-18 11-17-11z" fill="#f7f5f2" /></svg></button>
      <button class="slot" aria-label="Mail"><svg viewBox="0 0 148 156"><rect x="18" y="21" width="112" height="113" rx="27" fill="url(#gMail)" /><rect x="35" y="53" width="78" height="50" rx="5" fill="#f1f1f1" stroke="#d5d5d5" /><path d="M36 101l21-21M112 101L91 80M37 55l31 31q6 5 12 0l31-31" fill="none" stroke="#a5a5a5" stroke-width="2" /></svg></button>
      <button class="slot" aria-label="Calculator"><svg viewBox="0 0 148 156"><rect x="18" y="21" width="112" height="113" rx="27" fill="url(#gGrey)" /><rect x="44" y="36" width="60" height="84" rx="7" fill="#26282b" /><rect x="51" y="42" width="46" height="18" rx="3" fill="#55585c" /><g fill="#cfcfcf"><circle cx="57" cy="73" r="6" /><circle cx="74" cy="73" r="6" /><circle cx="57" cy="90" r="6" /><circle cx="74" cy="90" r="6" /><rect x="51" y="102" width="29" height="12" rx="6" /></g><g fill="#ef9436"><circle cx="91" cy="73" r="6" /><circle cx="91" cy="90" r="6" /><circle cx="91" cy="108" r="6" /></g></svg></button>
      <i class="dock-rule"></i>
      <button class="slot running" aria-label="Preview"><svg viewBox="0 0 148 156"><rect x="18" y="21" width="112" height="113" rx="27" fill="#f2f1f2" /><g clip-path="url(#shot)"><path d="M26 30h96v52H26z" fill="url(#gSky)" /><path d="M26 82h96v44H26z" fill="#22376a" /><path d="M26 98q12-6 24-1 14-8 30 0l42-4v34H26z" fill="#d8e3ee" /><path d="M26 96l10 2 8 6 8 1-4 4H26zM34 126q8-9 18-5l12 5z" fill="#51483f" /></g><path d="M77 101h48l9 33q1 6-8 6H75q-9 0-7-6z" fill="#c9ccd0" opacity=".92" /><path d="M84 103l-6 28h46l-6-28z" fill="#8e969d" opacity=".6" /><path d="M90 108l10-3 4 10-12 6zM104 120l8-4 2 10h-10z" fill="#4d545c" opacity=".7" /><ellipse cx="101" cy="133" rx="22" ry="5" fill="#fff" /><rect x="75" y="77" width="51" height="25" rx="5" fill="#17181a" /><ellipse cx="100" cy="82" rx="20" ry="4" fill="#47494b" /></svg></button>
      <button class="slot" aria-label="Music"><svg viewBox="0 0 148 156"><rect x="18" y="21" width="112" height="113" rx="27" fill="url(#gMusic)" /><path d="M57 53q0-5 5-6l33-8q4-1 4 3v52c0 9-5 14-12 14-5 0-8-3-8-8 0-8 7-10 12-11 3-1 4-2 4-4V57l-33 8v37c0 9-5 13-12 13-5 0-9-3-9-8 0-6 4-9 11-10 3-1 5-2 5-5z" fill="#fff" /></svg></button>
      <button class="slot running" aria-label="Paintbrush"><svg viewBox="0 0 148 156"><rect x="6" y="11" width="135" height="135" rx="9" fill="#2d62a8" /><rect x="6" y="10" width="135" height="133" rx="9" fill="url(#gPaint)" /><path d="M22 35l103 8 2 79-106-2z" fill="#eee" /><path d="M25 36l30 2-30 5z" fill="#d7572e" /><path d="M18 41l102-9 11 83-105 12z" fill="#fbfbfb" /><g clip-path="url(#photo)"><path d="M18 30h115v100H18z" fill="url(#gNight)" /><path d="M18 80l18-13 10 11 12 9 26-8 46-14v70H18z" fill="#49648f" /><path d="M36 98l22-12 27-8 20 18 30 20v15H18V92z" fill="#20293a" /><path d="M18 98q40 6 60 28H18z" fill="#2e2f22" /><path d="M50 66L105 38M60 74l60-34M56 50l30-10M80 90l50-30" stroke="#fff" stroke-width="2" opacity=".55" /></g><path d="M54 39l3-6 7-2c0-14 18-14 19 0l8 2 3 4-1 4-38 3z" fill="#85888b" /><circle cx="73" cy="26" r="4" fill="#68a7dc" /><path d="M134 33q4-3 4 3l-35 81-12-6z" fill="url(#gWood)" /><path d="M91 107l13 5-10 17-11-4z" fill="#bdbfc2" /><path d="M82 121l13 5q-4 14-16 15-5 1-9-2 6-3 7-9z" fill="#7e3d17" /></svg></button>
      <i class="dock-rule"></i>
      <button class="slot" aria-label="Bin"><svg viewBox="0 0 148 156"><path d="M24 28l14 101q2 12 36 12t36-12l14-101z" fill="url(#gBin)" /><ellipse cx="74" cy="28" rx="50" ry="11" fill="#d3b5b5" stroke="#f4eeee" stroke-width="2" /></svg></button>
    </nav>
  </div>
</template>

<style>
html,
body {
  background: #140711;
}
</style>

<style scoped>
* {
  box-sizing: border-box;
}
button {
  border: 0;
  padding: 0;
  margin: 0;
  background: none;
  font: inherit;
  color: inherit;
  display: flex;
  align-items: center;
  justify-content: center;
  white-space: nowrap;
}
svg {
  display: block;
  flex: none;
  overflow: visible;
}
.caret {
  width: 16px;
  height: 16px;
}
.desktop {
  min-height: 100vh;
  display: flex;
  flex-direction: column;
  overflow: hidden;
  font-family: Inter, "Liberation Sans", sans-serif;
  font-size: 24px;
  color: #222;
  background: linear-gradient(90deg, #02101c 0%, #05121e 20%, #27041b 21%, #330a2c 35%, #4a1618 42%, #2d0419 55%, #36122f 68%, #3a0a20 78%, #571a16 85%, #852a15 95%, #8b2a14 100%);
}

/* System menu bar */
.menubar {
  height: 48px;
  display: flex;
  align-items: center;
  padding: 0 38px;
  font-size: 26px;
  color: #f3e8e5;
  background: linear-gradient(90deg, #4c342b 0%, #5f3a29 16%, #7d3f24 32%, #8c3a1e 50%, #7f2f1f 66%, #592724 83%, #3b1f29 100%);
}
.apple {
  width: 28px;
  height: 34px;
  fill: #f3e8e5;
  margin-right: 42px;
}
.menus {
  display: flex;
  gap: 40px;
}
.app-name {
  font-weight: 700;
}
.extras {
  margin-left: auto;
  display: flex;
  align-items: center;
  gap: 37px;
  fill: #f1e4e2;
}

/* Window */
.window {
  margin-top: 2px;
  border-radius: 20px;
  overflow: hidden;
  display: flex;
  flex-direction: column;
  background: #f2f2f2;
}
.titlebar {
  height: 64px;
  display: grid;
  grid-template-columns: 1fr auto 1fr;
  align-items: center;
  background: #387a49;
  border-top: 2px solid #6f9f7b;
  padding: 0 22px 0 25px;
  color: #dcebdf;
}
.title-left {
  display: flex;
  align-items: center;
}
.lights {
  display: flex;
  gap: 14px;
  margin-right: 53px;
}
.light {
  width: 26px;
  height: 26px;
  border-radius: 50%;
}
.red { background: #ec6a5e; }
.amber { background: #f4bf4f; }
.lime { background: #61c554; }
.autosave {
  display: flex;
  align-items: center;
  gap: 12px;
  font-size: 22px;
  font-weight: 500;
  white-space: nowrap;
}
.toggle {
  width: 78px;
  height: 28px;
  border-radius: 14px;
  display: flex;
  align-items: center;
  gap: 6px;
  background: #2b4f36;
}
.toggle input {
  appearance: none;
  width: 0;
  height: 0;
  margin: 0;
  margin-right: -6px;
}
.toggle i {
  width: 26px;
  height: 26px;
  border-radius: 50%;
  background: #fff;
}
.toggle b {
  font-size: 15px;
  font-weight: 600;
}
.quick {
  display: flex;
  align-items: center;
  gap: 22px;
  margin-left: 24px;
  fill: none;
  stroke: #fff;
  stroke-width: 2.4;
}
.quick .small {
  margin: 0 -6px 0 -8px;
}
.dim {
  color: #fff;
  opacity: 0.4;
}
.doc-title {
  margin: 0;
  display: flex;
  align-items: center;
  gap: 8px;
  font-size: 26px;
  font-weight: 700;
}
.doc-title .caret {
  color: #6f9f7b;
}
.title-right {
  display: flex;
  justify-content: flex-end;
  gap: 34px;
  fill: none;
  stroke: #fff;
  stroke-width: 2.4;
}

/* Ribbon tabs */
.tabs {
  height: 62px;
  display: flex;
  justify-content: space-between;
  background: #f5f5f5;
  padding: 0 20px 0 22px;
}
.tab-list {
  display: flex;
  gap: 49px;
  padding-top: 2px;
}
.tab {
  height: 54px;
  padding-top: 4px;
  border-bottom: 6px solid transparent;
  font-size: 26px;
  font-weight: 500;
  color: #262626;
}
.tab.active {
  font-weight: 700;
  border-bottom-color: #387a49;
  border-radius: 2px;
}
.tell {
  gap: 18px;
  margin-left: -12px;
}
.tab-actions {
  display: flex;
  gap: 20px;
  padding-top: 8px;
}
.pill {
  height: 48px;
  padding: 0 12px 0 16px;
  gap: 8px;
  border: 2px solid #d6d6d6;
  border-radius: 6px;
  background: #fff;
  color: #39784a;
  font-weight: 600;
  fill: none;
  stroke: #39784a;
  stroke-width: 2.2;
}

/* Ribbon */
.ribbon {
  height: 148px;
  display: flex;
  align-items: flex-start;
  padding-top: 6px;
  background: linear-gradient(#f4f4f4, #ededed);
  border-bottom: 2px solid #c6c6c6;
  color: #111;
  font-size: 21px;
}
.group {
  height: 124px;
  flex: none;
  display: flex;
  border-right: 2px solid #d3d3d3;
}
.ribbon .caret {
  color: #333;
}
.clipboard { width: 210px; padding-left: 20px; }
.font { width: 541px; padding-left: 20px; }
.align { width: 323px; padding-left: 19px; }
.wrap { width: 278px; padding-left: 22px; }
.number { width: 352px; padding-left: 19px; }
.styles { width: 364px; padding-left: 15px; }
.cells { width: 338px; padding-left: 17px; }
.editing { width: 311px; padding-left: 25px; }
.analyze { border-right: 0; padding-left: 12px; }
.font,
.align,
.wrap,
.number {
  flex-direction: column;
  padding-top: 10px;
  gap: 16px;
}
.line {
  height: 48px;
  display: flex;
  align-items: center;
}
.big {
  width: 100px;
  padding-top: 6px;
  display: flex;
  flex-direction: column;
  align-items: center;
}
.big.cf {
  width: 130px;
}
.icon-row {
  gap: 8px;
}
.big-label {
  margin-top: 9px;
  line-height: 24px;
  text-align: center;
  white-space: nowrap;
}
.grid {
  fill: #fafafa;
  stroke: #3b3b3b;
  stroke-width: 2.2;
}
.stack {
  padding-top: 6px;
  display: flex;
  flex-direction: column;
  gap: 11px;
}
.stack button {
  gap: 10px;
  justify-content: flex-start;
}
.clipboard .stack {
  padding-left: 5px;
}
.clipboard .icon-row {
  gap: 2px;
}
.clipboard .big-label {
  align-self: flex-start;
  padding-left: 20px;
}
.editing .stack {
  margin-right: 6px;
}
.combo {
  position: relative;
  display: flex;
  align-items: center;
}
.combo select {
  appearance: none;
  width: 100%;
  height: 48px;
  margin: 0;
  padding: 0 10px;
  border: 2px solid #c3c3c3;
  border-radius: 8px;
  background: #fff;
  color: #111;
  font: inherit;
  font-size: 23px;
}
.combo .caret {
  position: absolute;
  right: 6px;
}
.name { width: 282px; margin-right: 4px; }
.size { width: 108px; }
.format { width: 310px; }
.grow {
  margin-left: 4px;
}
.tool {
  width: 52px;
  height: 40px;
}
.drop {
  width: 24px;
  height: 40px;
}
.rule {
  width: 2px;
  height: 36px;
  margin: 0 14px;
  background: #d3d3d3;
}
.glyph {
  width: 51px;
  font-size: 25px;
  color: #3b3b3b;
}
.bold { font-weight: 700; }
.italic { font-family: "Liberation Serif", serif; font-style: italic; font-size: 28px; }
.under { text-decoration: underline; }
.sign {
  width: 50px;
  font: 34px "Open Sans", sans-serif;
  font-weight: 300;
  color: #3b3b3b;
}
.al {
  width: 48px;
  height: 48px;
  margin-right: 4px;
  border-radius: 6px;
  fill: none;
  stroke: #333;
  stroke-width: 2.4;
}
.pressed {
  background: #c4c4c4;
}
.blue {
  stroke: #3c89d0;
}
.ab {
  font: 17px "Liberation Sans", sans-serif;
  fill: #3b3b3b;
  stroke: none;
}
.dec {
  font: 16px "Liberation Sans", sans-serif;
  fill: #3b3b3b;
}
.wide {
  gap: 14px;
  height: 48px;
}
.wide .caret {
  margin-left: -6px;
}

/* Formula bar */
.formula-bar {
  height: 54px;
  display: flex;
  align-items: center;
  background: #fff;
  border-bottom: 2px solid #a5a5a5;
}
.name-box {
  width: 171px;
  height: 52px;
  padding: 0 9px 0 19px;
  display: flex;
  align-items: center;
  border: 2px solid #bfbfbf;
  border-width: 2px 2px 0 0;
}
.name-box input {
  width: 125px;
  border: 0;
  padding: 0;
  margin: 0;
  font: 23px Inter, sans-serif;
  color: #333;
  background: none;
}
.fx-tools {
  display: flex;
  align-items: center;
  gap: 34px;
  padding: 0 15px 0 28px;
  height: 32px;
  border-right: 2px solid #dcdcdc;
}
.fx {
  font: italic 32px "Liberation Serif", serif;
  color: #3b3b3b;
}
.formula {
  flex: 1;
  border: 0;
  background: none;
}
.expand {
  margin-right: 7px;
}

/* Worksheet */
.sheet {
  position: relative;
  border-top: 2px solid #bdbdbd;
  margin-top: 2px;
  background: #fff;
  overflow: hidden;
}
table {
  width: 100%;
  table-layout: fixed;
  border-collapse: separate;
  border-spacing: 0;
  font: 15px/16px Lato, "Open Sans", sans-serif;
  color: #000;
}
.c-num { width: 30px; }
.c-a { width: 82px; }
.c-b { width: 394px; }
.c-c { width: 124px; }
.c-d { width: 126px; }
.c-wide { width: 108px; }
.c-std { width: 74px; }
th,
td {
  padding: 0;
  font-weight: 400;
  border: 0 solid #d4d4d4;
  white-space: nowrap;
}
thead th {
  height: 30px;
  color: #555;
  background: linear-gradient(#fff, #f1f1f1);
  border-width: 0 2px 2px 0;
  border-color: #e2e2e2;
  border-bottom-color: #bdbdbd;
}
thead th.current {
  color: #2d7544;
  background: #f1f1f1;
  border-bottom: 4px solid #387a49;
  padding-top: 2px;
}
.corner svg {
  margin-left: 8px;
}
tbody th {
  font-size: 14px;
  color: #5e5e5e;
  background: #fff;
  border-width: 0 2px 2px 0;
  border-color: #bdbdbd;
  border-bottom-color: #e6e6e6;
}
tbody th.current {
  color: #2d7544;
  background: #efefef;
  border-right: 4px solid #387a49;
}
tbody td {
  border-width: 0 2px 2px 0;
}
.sliver th,
.sliver td { height: 4px; }
.h18 th { height: 18px; }
.h22 th { height: 22px; }
.h24 th { height: 24px; }
.dark { background: #c7d6a0; }
.sliver .b,
.sliver .n { border-color: #000; }
.sliver .a { border-right-color: #000; border-bottom-color: #c7d6a0; }
.r-dark .a,
.r-dark .b,
.r-dark .c,
.r-dark .d { background: #c7d6a0; }
.r-light .a,
.r-light .b,
.r-light .c,
.r-light .d { background: #dae4c3; }
.row.r-light.row-60 .d { background: #c7d6a0; }
.r-dark .a,
.r-dark .b,
.r-dark .c,
.r-dark .d,
.r-light .a,
.r-light .b,
.r-light .c,
.r-light .d,
.r-gap .a,
.r-gap .b,
.r-gap .c,
.r-gap .d { border-color: #000; }
.r-dark .a { border-bottom-width: 0; padding-bottom: 2px; }
.r-dark:not(.row-17) .a,
.r-dark:not(.row-17) .b { border-top-width: 2px; }
.r-light .a,
.r-light .b,
.r-gap .a,
.r-gap .b { border-bottom-width: 4px; }
.row .a,
.row .n {
  text-align: right;
  padding-right: 2px;
}
.row .b {
  position: relative;
  padding-left: 2px;
}
.row.row-59 .c { border-right-color: #fff; }
.row.row-59 .d { background: #fff; border-right-color: #fff; }
.row-61 .a,
.row-61 .b,
.row-61 .c,
.row-61 .d { border-bottom: 4px solid #000; }
.row-61 .c { border-right-color: #000; }
.row-63 .c,
.row-63 .d { border-top: 2px solid #000; }
.row-65 th,
.row-65 td { border-bottom-width: 0; }
.cursor {
  position: absolute;
  inset: -4px -4px -6px -4px;
  border: 4px solid #39774b;
  z-index: 1;
}
.cursor i {
  position: absolute;
  right: -8px;
  bottom: -8px;
  width: 14px;
  height: 14px;
  background: #39774b;
  border: 2px solid #fff;
}
.total th { height: 26px; }
.total .ta,
.total .tb {
  background: #a2ba66;
  border: 0 solid #000;
  border-bottom-width: 4px;
}
.total .tb {
  border-right-width: 4px;
  padding-left: 3px;
  font-size: 17px;
  font-weight: 700;
}
.total .tc,
.total .td {
  border: 2px solid #000;
  border-bottom-width: 4px;
  text-align: right;
  padding-right: 6px;
  font-family: "Liberation Sans", sans-serif;
}
.total .tc {
  border-right-width: 4px;
}
.total .warn {
  background: #ffff54;
  border-width: 0;
  padding-left: 2px;
  font-weight: 900;
}
.scroll-thumb {
  position: absolute;
  right: 6px;
  top: 307px;
  bottom: 20px;
  width: 20px;
  border-radius: 10px;
  background: #8b8b8b;
  opacity: 0.85;
}

/* Accounting equation picture */
.chart {
  position: absolute;
  left: 862px;
  top: 59px;
  width: 877px;
  height: 287px;
  margin: 0;
  padding: 7px 11px 0 6px;
  background: linear-gradient(90deg, #bdbdc1, #cacaca 3%, #c6c6c6 96%, #d6d6d6);
}
.chart-card {
  height: 280px;
  border: 4px solid #d3a449;
  border-bottom: 0;
  background: #fff;
  padding: 15px 36px 0;
  font: 20px/22px "Liberation Sans", sans-serif;
  color: #111;
}
.equation {
  display: flex;
}
.account {
  width: 122px;
}
.heading {
  height: 40px;
  display: flex;
  flex-direction: column;
  align-items: center;
  justify-content: flex-end;
  padding-bottom: 3px;
  font-size: 19px;
  font-weight: 700;
  line-height: 17px;
}
.tee {
  border-top: 4px solid #d3a449;
  display: grid;
  grid-template-columns: 62px 60px;
}
.side {
  height: 69px;
  padding-left: 7px;
  display: flex;
  flex-direction: column;
}
.side.debit {
  align-items: flex-end;
  padding: 0 9px 0 0;
  border-right: 3px solid #d3a449;
}
.side b {
  line-height: 20px;
  font-size: 24px;
}
.op {
  width: 40px;
  padding-top: 17px;
  text-align: center;
}
.drawing {
  margin: 15px 0 0 324px;
}
.heading.single {
  height: 22px;
}

/* Sheet tabs */
.sheet-tabs {
  height: 52px;
  display: flex;
  align-items: flex-start;
  border-top: 2px solid #cbcbcb;
  background: linear-gradient(#f4f4f4, #ebebeb);
}
.arrows {
  width: 122px;
  height: 42px;
  padding: 6px 31px 0 30px;
  display: flex;
  justify-content: space-between;
  border-right: 2px solid #d0d0d0;
}
.sheet-tab {
  height: 40px;
  margin-top: 4px;
  padding: 0 28px;
  color: #fff;
}
.sheet-tab.green { background: #4fad5b; }
.sheet-tab.blue { background: #2f6eba; }
.sheet-tab.long { padding: 0 35px; }
.sheet-tab.current {
  width: 240px;
  height: 44px;
  margin: 0 7px 0 15px;
  padding: 4px 7px 4px 0;
  background: linear-gradient(90deg, #f1f1f1, #fff 30%);
  border: 2px solid #d0d0d0;
  border-width: 0 2px 2px 0;
  color: #3d7d4d;
  font-weight: 600;
}
.sheet-tab.current span {
  flex: 1;
  height: 34px;
  line-height: 40px;
  text-align: center;
  background: linear-gradient(90deg, #f4f6f4, transparent 30%), linear-gradient(#eef6ef, #a4d3a9);
}
.divider {
  width: 2px;
  height: 42px;
  margin: 0 6px;
  background: #d0d0d0;
}
.add {
  width: 76px;
  height: 42px;
  margin-top: 2px;
  border-right: 2px solid #cfcfcf;
}

/* Status bar */
.status {
  height: 46px;
  display: flex;
  align-items: center;
  border-top: 2px solid #9c9c9c;
  background: linear-gradient(#dedede, #c0c0c0);
  color: #4d4d4d;
}
.ready {
  margin-left: 48px;
}
.access {
  margin-left: 38px;
  gap: 5px;
}
.views {
  margin-left: auto;
  display: flex;
}
.view {
  width: 72px;
  height: 44px;
}
.view.on {
  background: #979797;
}
.zoom {
  display: flex;
  align-items: center;
  gap: 14px;
  margin-left: 16px;
}
.zoom input {
  appearance: none;
  width: 200px;
  height: 8px;
  margin: 0;
  border-radius: 4px;
  background: radial-gradient(circle at 50% 50%, #ddd 3px, #919191 4px);
}
.zoom input::-webkit-slider-thumb {
  appearance: none;
  width: 32px;
  height: 32px;
  border-radius: 50%;
  background: #f4f4f4;
  box-shadow: 0 1px 3px #777;
}
.percent {
  width: 146px;
  padding-left: 40px;
}

/* Dock */
.dock {
  align-self: center;
  display: flex;
  height: 170px;
  margin: 2px 0 10px;
  padding: 0 4px;
  border: 2px solid #b07c86;
  border-left-color: #777b87;
  border-right-color: #d18679;
  border-radius: 48px;
  background: linear-gradient(90deg, #5b606e 0%, #5d616e 10%, #7c5a6b 16%, #8e5872 23%, #965a78 29%, #a35f60 34%, #a55d60 40%, #9b576a 45%, #855866 52%, #8b5770 63%, #985a80 71%, #8f5a75 75%, #a95f6f 83%, #b36062 91%, #c36656 100%);
}
.defs {
  position: absolute;
}
.slot {
  width: 148px;
  flex-direction: column;
  justify-content: flex-start;
}
.slot svg {
  width: 148px;
  height: 156px;
}
.running::after {
  content: "";
  width: 8px;
  height: 8px;
  border-radius: 50%;
  background: #140307;
}
.letter {
  font: 700 30px "Open Sans", sans-serif;
  fill: #fff;
  text-anchor: middle;
}
.dock-rule {
  width: 2px;
  height: 126px;
  margin: 20px 32px;
  background: #7b3c4c;
}
</style>
